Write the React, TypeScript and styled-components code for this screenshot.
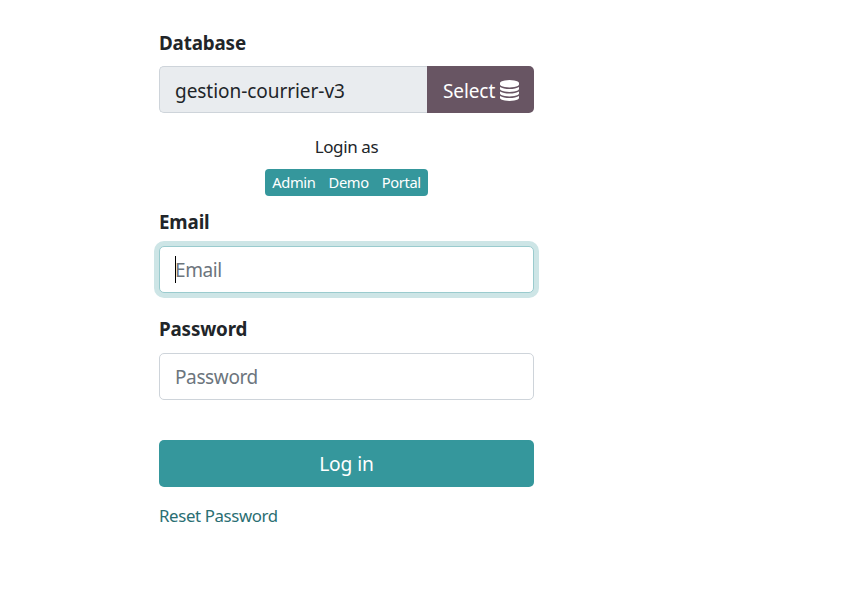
import React from "react";
import styled, { createGlobalStyle, css } from "styled-components";

const GlobalStyle = createGlobalStyle`
  *, *::before, *::after { box-sizing: border-box; }
  body {
    margin: 0;
    background: #fff;
    color: #212529;
    font-family: "Noto Sans", "Open Sans", sans-serif;
    font-size: 19px;
    line-height: 30px;
    overflow: hidden;
  }
  input, button { font: inherit; }
`;

const Page = styled.main`
  min-height: 595px;
  padding: 28px 0 0 159px;
`;

const LoginForm = styled.form`
  display: flex;
  flex-direction: column;
  width: 375px;
`;

const Field = styled.div<{ $labelGap: number }>`
  display: flex;
  flex-direction: column;
  gap: ${(p) => p.$labelGap}px;
`;

const Label = styled.label`
  font-weight: 700;
  font-size: 18.8px;
  letter-spacing: -0.15px;
`;

const InputGroup = styled.div`
  display: flex;
`;

const InputFrame = styled.div`
  position: relative;
  display: flex;
`;

const Input = styled.input<{ $active?: boolean }>`
  flex: 1;
  min-width: 0;
  height: 47px;
  padding: 0 15px;
  border: 1px solid #ced4da;
  border-radius: 5px;
  background: #fff;
  color: #212529;
  caret-color: transparent;
  outline: none;
  ${(p) =>
    p.$active &&
    css`
      border-color: #9acbce;
      box-shadow: 0 0 0 5px #cde5e6;
    `}
  &::placeholder {
    color: #6c757d;
    opacity: 1;
    letter-spacing: -0.38px;
  }
`;

const DatabaseInput = styled(Input)`
  padding-top: 2px;
  border-right: 0;
  border-radius: 5px 0 0 5px;
  background: #e9ecef;
  letter-spacing: -0.05px;
`;

const Caret = styled.span`
  position: absolute;
  left: 16px;
  top: 10px;
  width: 1px;
  height: 27px;
  background: #000;
`;

const SelectButton = styled.button`
  display: flex;
  align-items: center;
  gap: 5px;
  width: 107px;
  height: 47px;
  padding: 2px 0 0 16px;
  border: 0;
  border-radius: 0 5px 5px 0;
  background: #685563;
  color: #fff;
  letter-spacing: -0.1px;
`;

const DatabaseIcon = styled.svg`
  width: 19px;
  height: 21px;
  flex: none;
  fill: currentColor;
`;

const QuickLogin = styled.div`
  display: flex;
  flex-direction: column;
  align-items: center;
  gap: 10px;
  padding: 21px 0 11px;
`;

const QuickTitle = styled.div`
  font-size: 17px;
  line-height: 25px;
  letter-spacing: -0.38px;
`;

const ButtonGroup = styled.div`
  display: flex;
  justify-content: center;
  width: 163px;
  height: 27px;
  border-radius: 4px;
  background: #35979c;
  overflow: hidden;
`;

const QuickButton = styled.button`
  padding: 0 6.6px;
  border: 0;
  background: transparent;
  color: #fff;
  font-size: 14.7px;
  line-height: 27px;
  letter-spacing: -0.38px;
`;

const PasswordField = styled(Field)`
  margin-top: 21px;
`;

const SubmitButton = styled.button`
  height: 47px;
  margin-top: 40px;
  padding: 0;
  border: 0;
  border-radius: 5px;
  background: #35979c;
  color: #fff;
  font-size: 19.2px;
  letter-spacing: -0.1px;
`;

const ResetLink = styled.a`
  align-self: flex-start;
  margin-top: 16px;
  color: #2a6e72;
  font-size: 16.8px;
  line-height: 25px;
  letter-spacing: -0.35px;
  text-decoration: none;
`;

const accounts = ["Admin", "Demo", "Portal"];

export default function App() {
  return (
    <>
      <GlobalStyle />
      <Page>
        <LoginForm onSubmit={(e) => e.preventDefault()}>
          <Field $labelGap={8}>
            <Label htmlFor="db">Database</Label>
            <InputGroup>
              <DatabaseInput id="db" readOnly value="gestion-courrier-v3" />
              <SelectButton type="button">
                Select
                <DatabaseIcon viewBox="0 0 1536 1792" preserveAspectRatio="none" aria-hidden="true">
                  <path d="M768 768q237 0 443-43t325-127v170q0 69-103 128t-280 93.5-385 34.5-385-34.5-280-93.5-103-128v-170q119 84 325 127t443 43zm0 768q237 0 443-43t325-127v170q0 69-103 128t-280 93.5-385 34.5-385-34.5-280-93.5-103-128v-170q119 84 325 127t443 43zm0-384q237 0 443-43t325-127v170q0 69-103 128t-280 93.5-385 34.5-385-34.5-280-93.5-103-128v-170q119 84 325 127t443 43zm0-1152q208 0 385 34.5t280 93.5 103 128v128q0 69-103 128t-280 93.5-385 34.5-385-34.5-280-93.5-103-128v-128q0-69 103-128t280-93.5 385-34.5z" />
                </DatabaseIcon>
              </SelectButton>
            </InputGroup>
          </Field>
          <QuickLogin>
            <QuickTitle>Login as</QuickTitle>
            <ButtonGroup>
              {accounts.map((name) => (
                <QuickButton key={name} type="button">
                  {name}
                </QuickButton>
              ))}
            </ButtonGroup>
          </QuickLogin>
          <Field $labelGap={9}>
            <Label htmlFor="login">Email</Label>
            <InputFrame>
              <Input id="login" placeholder="Email" $active />
              <Caret />
            </InputFrame>
          </Field>
          <PasswordField $labelGap={9}>
            <Label htmlFor="password">Password</Label>
            <InputFrame>
              <Input id="password" type="password" placeholder="Password" />
            </InputFrame>
          </PasswordField>
          <SubmitButton type="submit">Log in</SubmitButton>
          <ResetLink href="#">Reset Password</ResetLink>
        </LoginForm>
      </Page>
    </>
  );
}
